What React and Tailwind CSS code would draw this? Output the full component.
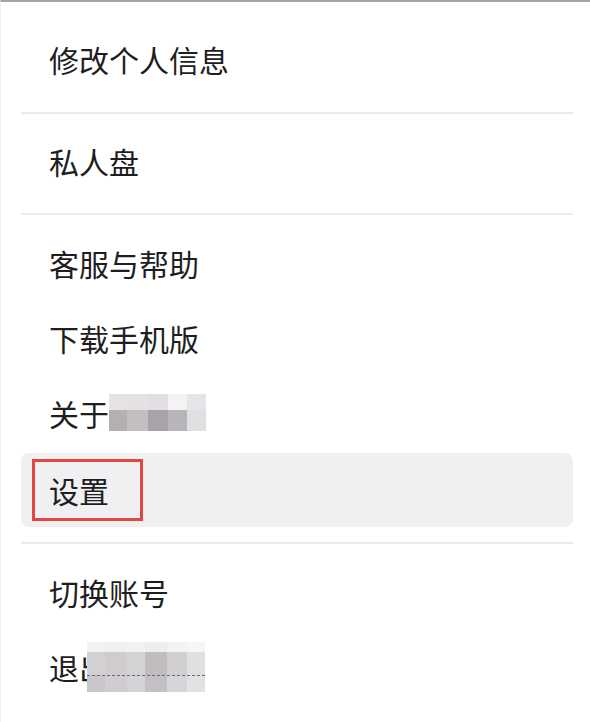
import React from 'react';

const font = { fontFamily: '"Noto Sans CJK SC", "Noto Sans", sans-serif' };

// pixelated (mosaic) blur blocks used to hide product name
const aboutMosaic = {
  cols: [18, 21, 20, 19, 19],
  rows: [
    { h: 16, colors: ['#e6e3e5', '#e3e1e3', '#e1dfe1', '#f4f2f3', '#e5e4e8'] },
    { h: 21, colors: ['#b5aeb3', '#c1bdc0', '#a8a3a8', '#b8b5ba', '#e0dfe2'] },
  ],
};

const logoutMosaic = {
  cols: [18, 22, 18, 22, 20, 18],
  rows: [
    { h: 10, colors: ['#f4f3f4', '#f1f0f1', '#f3f2f3', '#efeeef', '#f3f2f4', '#f6f6f7'] },
    { h: 23, colors: ['#d3d0d3', '#cfcbce', '#d4d2d5', '#c0bcbf', '#d1cfd2', '#e0dfe2'] },
    { h: 17, colors: ['#c9c6c9', '#cfcdcf', '#d5d3d6', '#c3c0c3', '#d6d5d8', '#e2e1e4'] },
  ],
};

function Mosaic({ data, dashed }) {
  return (
    <span className="relative inline-flex flex-col">
      {data.rows.map((row, ri) => (
        <span key={ri} className="flex">
          {row.colors.map((c, ci) => (
            <span key={ci} style={{ width: data.cols[ci], height: row.h, background: c }} />
          ))}
        </span>
      ))}
      {dashed && (
        <span className="absolute left-0 right-0 top-[33px] border-t border-dashed border-[#6b6870]" />
      )}
    </span>
  );
}

function Item({ children }) {
  return (
    <div className="h-[75px] pl-[28px] pb-[6px] flex items-center text-[30px] leading-[30px] text-[#1e1e1e]">
      {children}
    </div>
  );
}

function Divider() {
  return <div className="h-[2px] bg-[#ebebeb]" />;
}

export default function App() {
  return (
    <div
      className="w-[590px] h-[722px] bg-white border-t-2 border-[#a4a4a4] border-l border-l-[#f0f0f0] overflow-hidden pl-[20px] pr-[17px]"
      style={font}
    >
      <div className="pt-[22px] pb-[13px]">
        <Item>修改个人信息</Item>
      </div>
      <Divider />
      <div className="py-3">
        <Item>私人盘</Item>
      </div>
      <Divider />
      <div className="pt-[13px] pb-[15px]">
        <Item>客服与帮助</Item>
        <Item>下载手机版</Item>
        <Item>
          <span>关于</span>
          <span className="-mt-[12px]">
            <Mosaic data={aboutMosaic} />
          </span>
        </Item>
        <div className="h-[74px] rounded-[8px] bg-[#f0f0f2] pl-[11px] flex items-center">
          <span className="border-[3px] border-[#e2463f] pl-[14px] pr-[31px] py-[13px] text-[30px] leading-[30px] text-[#1e1e1e]">
            设置
          </span>
        </div>
      </div>
      <Divider />
      <div className="pt-[13px]">
        <Item>切换账号</Item>
        <Item>
          <span className="relative">
            退出
            <span className="absolute left-[38px] top-[-28px]">
              <Mosaic data={logoutMosaic} dashed />
            </span>
          </span>
        </Item>
      </div>
    </div>
  );
}
